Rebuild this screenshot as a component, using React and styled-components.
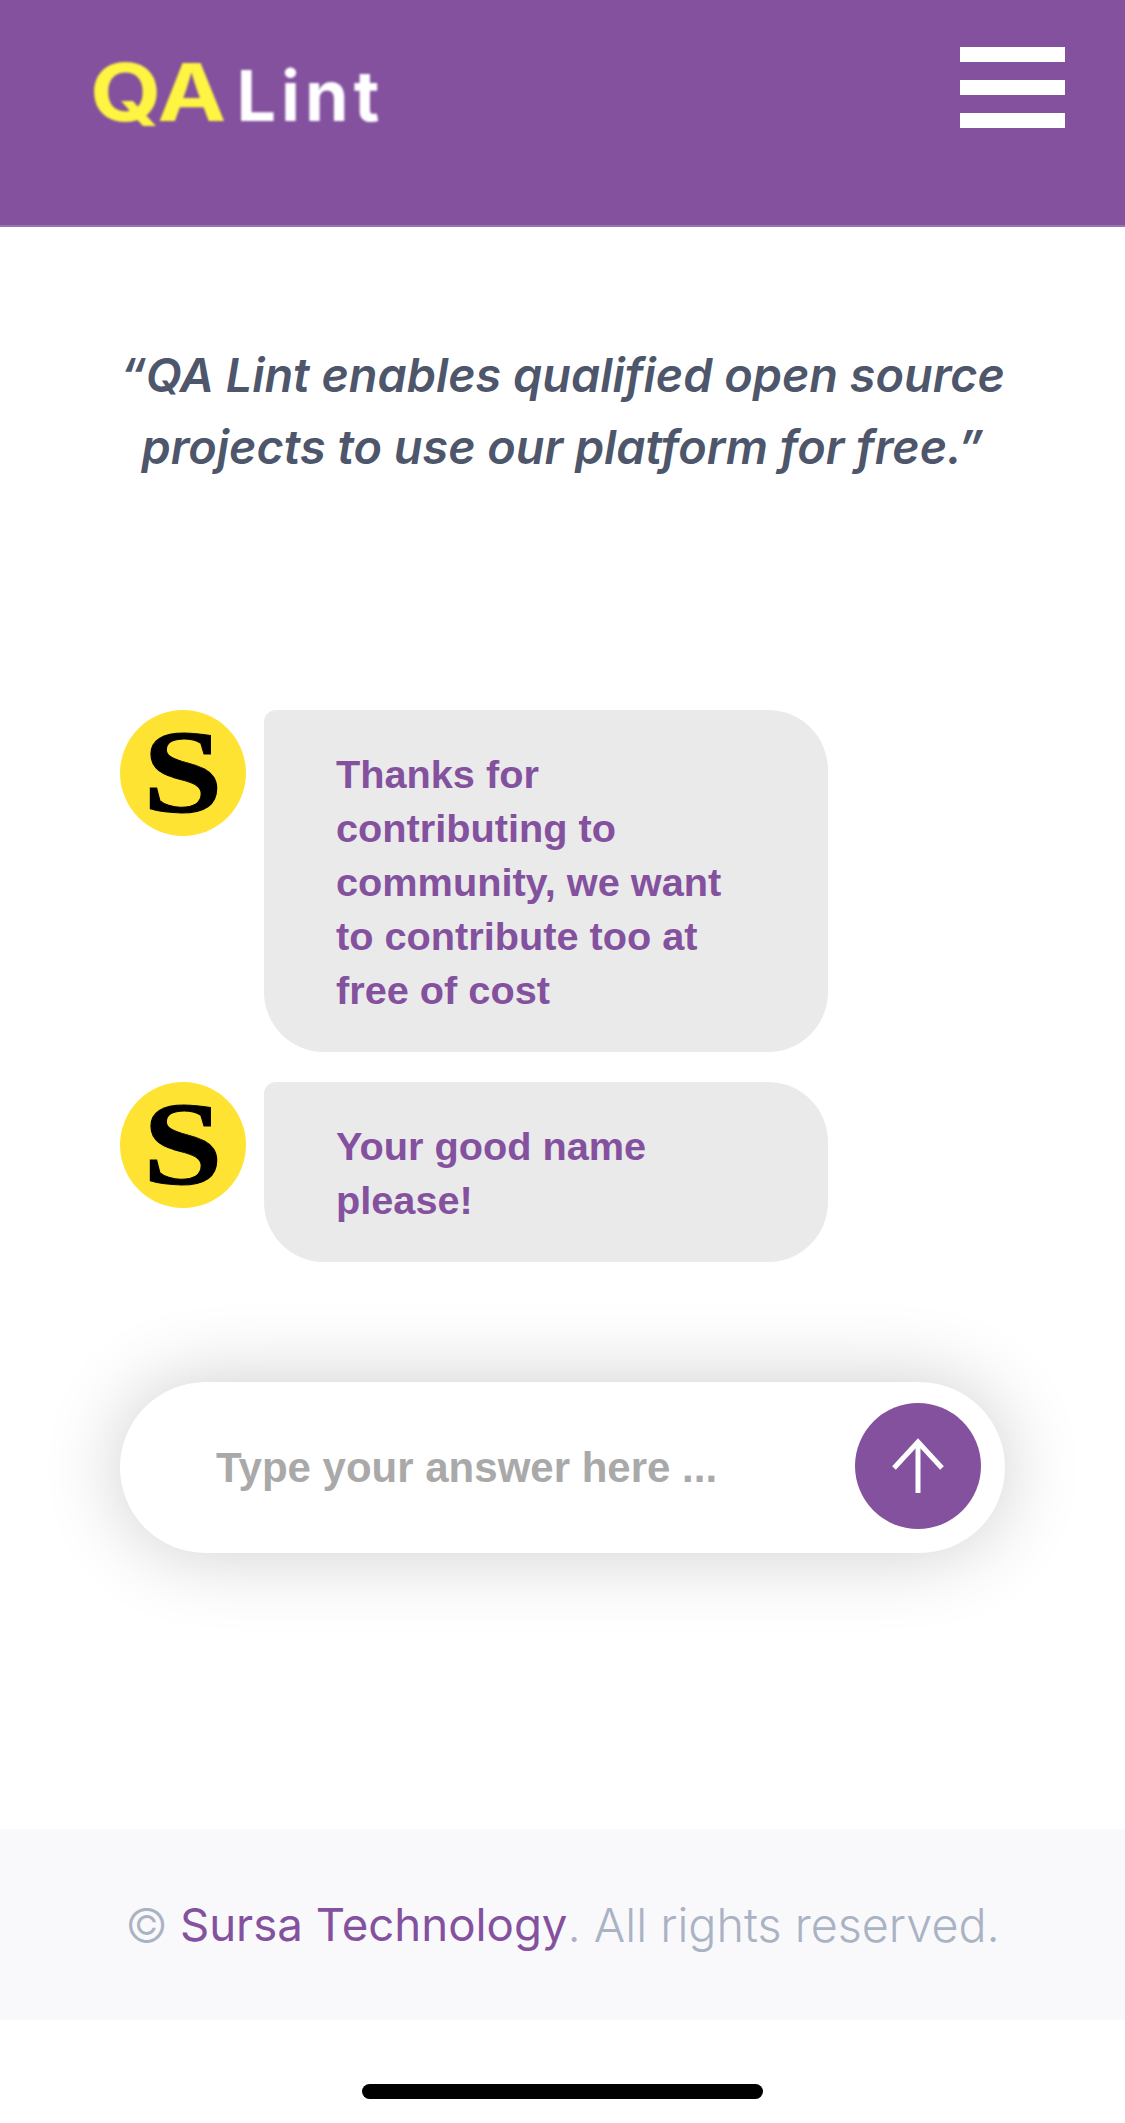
import React from "react";
import styled, { createGlobalStyle } from "styled-components";

const purple = "#84519f";

const Global = createGlobalStyle`
  html, body { margin: 0; padding: 0; background: #fff; }
  * { box-sizing: border-box; }
`;
const Page = styled.div`
  width: 1125px;
  height: 2123px;
  overflow: hidden;
  display: flex;
  flex-direction: column;
  font-family: Inter, "Liberation Sans", sans-serif;
`;
const Header = styled.header`
  height: 227px;
  flex: none;
  background: ${purple};
  border-bottom: 2px solid #9a74b2;
  display: flex;
  justify-content: space-between;
  align-items: flex-start;
  padding: 47px 60px 0 90px;
`;
const Logo = styled.div`
  display: flex;
  align-items: baseline;
  height: 90px;
  font-family: Inter, "Liberation Sans", sans-serif;
  filter: blur(0.8px);
`;
const LogoQA = styled.span`
  display: inline-block;
  color: #fdf542;
  font-size: 80px;
  line-height: 90px;
  font-weight: 700;
  transform: scaleX(1.15);
  transform-origin: left center;
`;
const LogoLint = styled.span`
  color: #fff;
  font-size: 70px;
  line-height: 90px;
  font-weight: 700;
  letter-spacing: 5px;
  margin-left: 28px;
`;
const Burger = styled.div`
  width: 105px;
  display: flex;
  flex-direction: column;
  gap: 18px;
`;
const BurgerBar = styled.div`
  height: 15px;
  background: #fff;
`;
const Quote = styled.p`
  margin: 112px 0 0;
  text-align: center;
  font-size: 46.8px;
  line-height: 72px;
  font-style: italic;
  font-weight: 600;
  color: #4d566b;
`;
const Chat = styled.section`
  margin: 227px 0 0 120px;
  display: flex;
  flex-direction: column;
  gap: 30px;
`;
const Row = styled.div`
  display: flex;
  align-items: flex-start;
  gap: 18px;
`;
const Avatar = styled.div`
  width: 126px;
  height: 126px;
  flex: none;
  border-radius: 50%;
  background: #ffe332;
  color: #000;
  display: flex;
  align-items: center;
  justify-content: center;
  font-family: "Liberation Serif", serif;
  font-weight: 700;
  font-size: 118px;
  line-height: 120px;
`;
const AvatarLetter = styled.span`
  display: block;
  transform: scaleX(1.22);
  -webkit-text-stroke: 1px #000;
`;
const Bubble = styled.div`
  width: 564px;
  padding: 37px 90px 35px 72px;
  border-radius: 12px 60px 60px 60px;
  background: #eaeaea;
  color: ${purple};
  font-family: "Liberation Sans", Arial, sans-serif;
  font-weight: 700;
  font-size: 39.7px;
  line-height: 54px;
`;
const InputBar = styled.form`
  margin: 120px 0 0 120px;
  width: 885px;
  height: 171px;
  flex: none;
  border-radius: 86px;
  background: #fff;
  box-shadow: 0 0 80px rgba(0, 0, 0, 0.2);
  display: flex;
  align-items: center;
  padding: 0 24px 3px 96px;
`;
const Answer = styled.input`
  flex: 1;
  min-width: 0;
  border: 0;
  outline: 0;
  background: transparent;
  padding: 3px 0 0;
  font-family: "Liberation Sans", Arial, sans-serif;
  font-weight: 700;
  font-size: 42px;
  &::placeholder { color: #a9a9a9; opacity: 1; }
`;
const Send = styled.button`
  width: 126px;
  height: 126px;
  flex: none;
  border: 0;
  padding: 0;
  border-radius: 50%;
  background: ${purple};
  display: flex;
  align-items: center;
  justify-content: center;
`;
const Footer = styled.footer`
  margin-top: 276px;
  height: 191px;
  flex: none;
  background: #f9f9fb;
  display: flex;
  align-items: center;
  justify-content: center;
  font-size: 46.7px;
  font-weight: 300;
  color: #aab3c4;
`;
const FooterLink = styled.a`
  color: ${purple};
  font-size: 45.6px;
  font-weight: 400;
  margin-left: 12px;
`;
const FooterRest = styled.span`
  white-space: pre;
`;
const HomeBarWrap = styled.div`
  padding-top: 64px;
  display: flex;
  justify-content: center;
`;
const HomeBar = styled.div`
  width: 401px;
  height: 15px;
  border-radius: 8px;
  background: #000;
`;

export default function App() {
  return (
    <Page>
      <Global />
      <Header>
        <Logo>
          <LogoQA>QA</LogoQA>
          <LogoLint>Lint</LogoLint>
        </Logo>
        <Burger>
          <BurgerBar />
          <BurgerBar />
          <BurgerBar />
        </Burger>
      </Header>
      <Quote>
        “QA Lint enables qualified open source
        <br />
        projects to use our platform for free.”
      </Quote>
      <Chat>
        <Row>
          <Avatar><AvatarLetter>S</AvatarLetter></Avatar>
          <Bubble>Thanks for contributing to community, we want to contribute too at free of cost</Bubble>
        </Row>
        <Row>
          <Avatar><AvatarLetter>S</AvatarLetter></Avatar>
          <Bubble>Your good name please!</Bubble>
        </Row>
      </Chat>
      <InputBar>
        <Answer placeholder="Type your answer here ..." />
        <Send type="button" aria-label="Send">
          <svg width="54" height="56" viewBox="0 0 54 56" fill="none" stroke="#fff" strokeWidth="5">
            <path d="M27 3V55" />
            <path d="M3 30L27 4L51 30" />
          </svg>
        </Send>
      </InputBar>
      <Footer>
        ©<FooterLink>Sursa Technology</FooterLink>
        <FooterRest>. All rights reserved.</FooterRest>
      </Footer>
      <HomeBarWrap>
        <HomeBar />
      </HomeBarWrap>
    </Page>
  );
}
